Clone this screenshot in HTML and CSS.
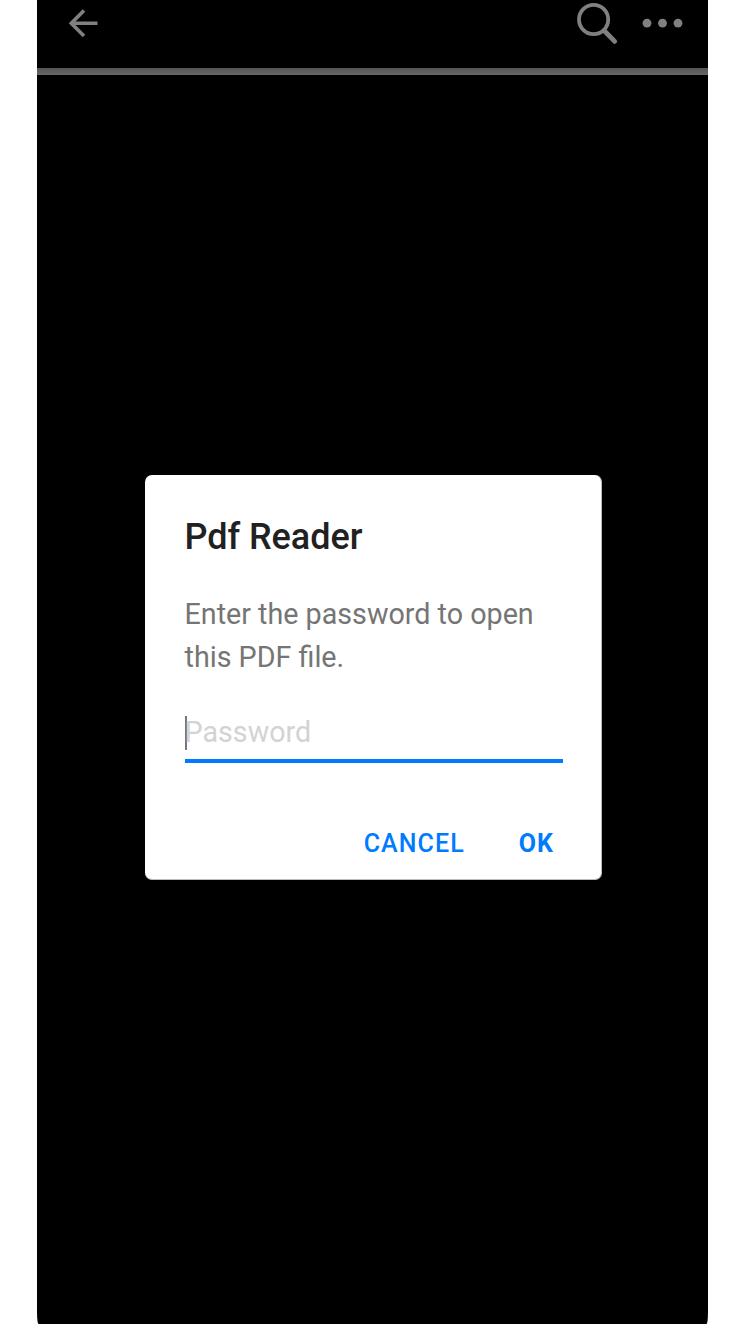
FILE: index.html
```html
<!DOCTYPE html>
<html lang="en">
<head>
<meta charset="utf-8">
<title>Pdf Reader</title>
<link rel="stylesheet" href="styles.css">
</head>
<body>
<div class="screen">
  <header class="toolbar">
    <svg class="back" viewBox="0 0 32 32"><path d="M30.500 16.200H4.500M17 3.500L4.300 16.200 17 28.900"/></svg>
    <svg class="search" viewBox="0 0 42 42"><circle cx="16.600" cy="16.500" r="14.600"/><path class="handle" d="M27.500 28l10.200 10.400"/></svg>
    <svg class="more" viewBox="0 0 42 12"><circle cx="5" cy="6.200" r="4.400"/><circle cx="20.500" cy="6.200" r="4.400"/><circle cx="36" cy="6.200" r="4.400"/></svg>
  </header>
  <main class="viewer">
    <section class="dialog">
      <h1 class="title">Pdf Reader</h1>
      <p class="message">Enter the password to open<br>this PDF file.</p>
      <div class="field"><span class="caret"></span><span class="placeholder">Password</span></div>
      <div class="actions"><span class="cancel">CANCEL</span><span class="ok">OK</span></div>
    </section>
  </main>
</div>
</body>
</html>
```
FILE: styles.css
```css
* { box-sizing: border-box; }
body { margin: 0; background: #fff; font-family: Roboto, sans-serif; }
.screen { width: 671px; height: 1324px; margin-left: 37px; background: #000; border-radius: 0 0 1.5px 1.5px / 0 0 12px 12px; overflow: hidden; }
.toolbar { height: 75px; background: linear-gradient(#545454, #686868) bottom / 100% 7px no-repeat; display: flex; align-items: flex-start; padding: 0 24px 0 30px; }
.toolbar svg { fill: none; stroke: #808080; flex: none; }
.back { width: 32px; height: 32px; margin-top: 7px; stroke-width: 3.6; }
.search { width: 42px; height: 42px; margin: 3px 0 0 auto; stroke-width: 3.8; }
.search .handle { stroke-width: 4.8; stroke-linecap: round; }
.toolbar .more { width: 42px; height: 12px; margin: 17px 0 0 23px; fill: #808080; stroke: none; }
.viewer { padding: 400px 0 0 108px; }
.dialog { width: 457px; height: 405px; padding: 41px 38px 0 39.5px; background: #fff; border: 1px solid #bbb; border-width: 0 1px 1px 0; border-radius: 7px; }
.title { margin: 0; font-size: 36px; line-height: 42px; font-weight: 500; letter-spacing: -0.05px; color: #212121; white-space: nowrap; }
.message { margin: 35px 0 0; font-size: 28.7px; line-height: 43px; color: #757575; white-space: nowrap; }
.field { display: flex; height: 47px; margin-top: 37px; border-bottom: 4px solid #007bff; font-size: 28.7px; line-height: 33px; color: #d3d3d3; }
.caret { width: 2px; height: 34px; background: #777; margin-right: -2px; }
.actions { display: flex; justify-content: flex-end; gap: 54px; margin-top: 65px; padding-right: 9px; font-size: 25px; line-height: 32px; letter-spacing: 1px; color: #007bff; }
.cancel { font-weight: 500; letter-spacing: 1.1px; }
.ok { font-weight: 700; }
```
